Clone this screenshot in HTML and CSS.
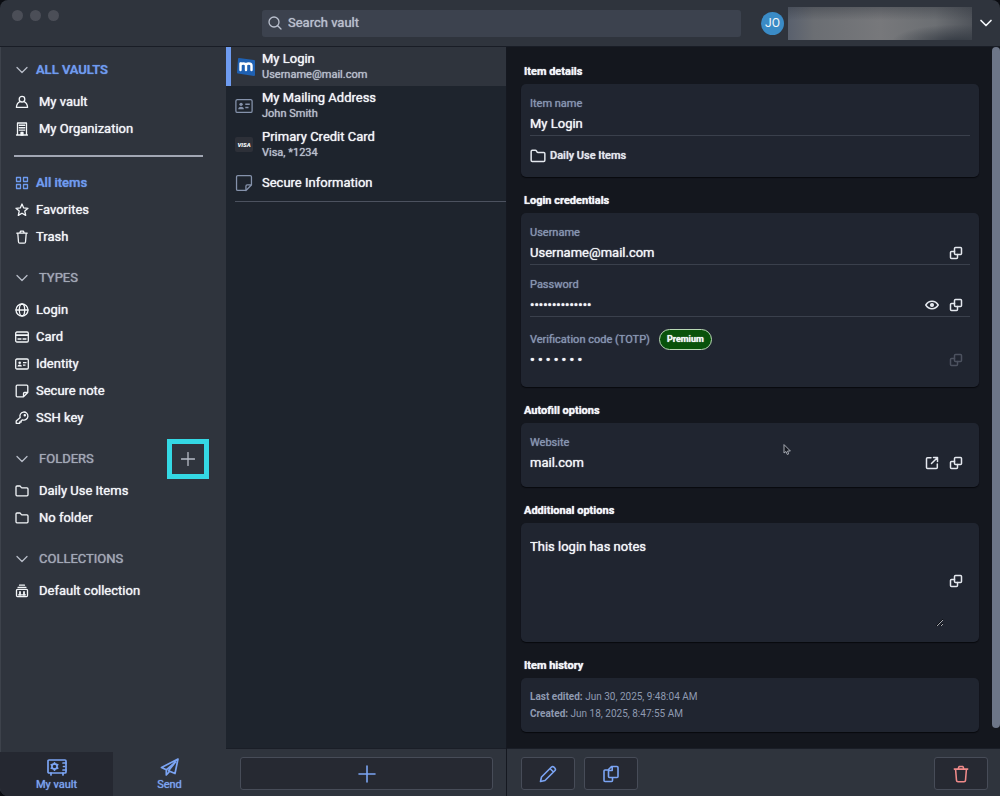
FILE: index.html
```html
<!DOCTYPE html>
<html lang="en">
<head>
<meta charset="utf-8">
<title>Vault</title>
<link rel="stylesheet" href="styles.css">
</head>
<body>
<svg class="sprite" aria-hidden="true">
  <symbol id="chevron" viewBox="0 0 14 14"><path d="M2 4.500l5 5 5-5"/></symbol>
  <symbol id="folder" viewBox="0 0 14 14"><path d="M1 10.800V3q0-1 1-1h2.600q.7 0 1 .5l.6 1q.2.4.8.4H12q1 0 1 1v5.900q0 1-1 1H2q-1 0-1-1z"/></symbol>
  <symbol id="note" viewBox="0 0 14 14"><path d="M8.500 12.800H2.200q-1 0-1-1V2.200q0-1 1-1h9.600q1 0 1 1v6.300l-4.300 4.300V9.500q0-1 1-1h3.300"/></symbol>
  <symbol id="idcard" viewBox="0 0 14 14"><rect x=".7" y="2" width="12.600" height="10" rx="1.200"/><g fill="currentColor" stroke="none"><circle cx="4.700" cy="5.700" r="1.300"/><path d="M2.500 9.500q0-2 2.200-2t2.200 2z"/><path d="M8 5h3.500v1.200H8zM8 7.500h2.500v1.200H8z"/></g></symbol>
  <symbol id="copy" viewBox="0 0 14 14"><rect x="5.500" y="1.500" width="7" height="7" rx="1"/><path d="M5.500 5.500h-3q-1 0-1 1v5q0 1 1 1h5q1 0 1-1v-3"/></symbol>
  <symbol id="trash" viewBox="0 0 14 14"><path d="M1.800 3.200h10.400M4.800 3L5.500 1.200h3L9.200 3M2.800 3.500l.7 8.500q.1 1.100 1.200 1.100h4.600q1.100 0 1.200-1.100l.7-8.500"/></symbol>
</svg>
<div class="window">
  <header class="topbar">
    <div class="lights"><i></i><i></i><i></i></div>
    <label class="search">
      <svg viewBox="0 0 14 14"><circle cx="6" cy="6" r="5"/><path d="M9.700 9.700L13 13"/></svg>
      <input type="text" placeholder="Search vault" aria-label="Search vault">
    </label>
    <button class="account" aria-label="Account">
      <span class="avatar">JO</span>
      <span class="redacted"></span>
      <svg class="bold"><use href="#chevron"/></svg>
    </button>
  </header>

  <aside class="sidebar">
    <nav class="filters">
      <section>
        <button class="heading active"><svg><use href="#chevron"/></svg>ALL VAULTS</button>
        <a class="row wide" href="#"><svg viewBox="0 0 14 14"><circle cx="7" cy="4.200" r="2.800"/><path d="M4.900 6.700C2.800 7.600 1.700 9.500 1.400 12.300h11.200C12.300 9.500 11.200 7.600 9.100 6.700"/></svg>My vault</a>
        <a class="row wide" href="#"><svg viewBox="0 0 14 14"><path d="M2.500 13V1h9v12zM1.500 13h11"/><path d="M4.300 3.300h1.200M6.400 3.300h1.200M8.500 3.300h1.200M4.300 5.700h1.200M6.400 5.700h1.200M8.500 5.700h1.200M4.300 8.100h1.200M6.400 8.100h1.200M8.500 8.100h1.200" stroke-width="1.400"/><path d="M6 13v-2.500h2V13z" fill="currentColor"/></svg>My Organization</a>
      </section>
      <hr>
      <section>
        <a class="row active" href="#"><svg viewBox="0 0 14 14"><path d="M1.500 1.500h4v4h-4zM8.500 1.500h4v4h-4zM1.500 8.500h4v4h-4zM8.500 8.500h4v4h-4z"/></svg>All items</a>
        <a class="row" href="#"><svg viewBox="0 0 14 14"><path d="M7 1l1.700 3.900 4.300.4-3.200 2.800.9 4.300L7 10.200l-3.700 2.200.9-4.300L1 5.300l4.300-.4z"/></svg>Favorites</a>
        <a class="row" href="#"><svg><use href="#trash"/></svg>Trash</a>
      </section>
      <section>
        <button class="heading"><svg><use href="#chevron"/></svg>TYPES</button>
        <a class="row" href="#"><svg viewBox="0 0 14 14"><circle cx="7" cy="7" r="6"/><ellipse cx="7" cy="7" rx="2.700" ry="6"/><path d="M1 7h12"/></svg>Login</a>
        <a class="row" href="#"><svg viewBox="0 0 14 14"><rect x=".7" y="2" width="12.600" height="10" rx="1.200"/><path d="M1 5.200h12" stroke-width="1.800"/><path d="M3 9h3M8 9h3"/></svg>Card</a>
        <a class="row" href="#"><svg><use href="#idcard"/></svg>Identity</a>
        <a class="row" href="#"><svg><use href="#note"/></svg>Secure note</a>
        <a class="row" href="#"><svg viewBox="0 0 14 14"><path d="M5.200 6.500A4 4 0 1 1 7.600 8.800L6.200 9.500V11H4.700v1.300H1.200V10z"/><circle cx="9.800" cy="4.200" r=".6" fill="currentColor"/></svg>SSH key</a>
      </section>
      <section>
        <div class="heading-bar">
          <button class="heading"><svg><use href="#chevron"/></svg>FOLDERS</button>
          <button class="add" aria-label="Add folder"><svg viewBox="0 0 14 14"><path d="M7 .5v13M.5 7h13"/></svg></button>
        </div>
        <a class="row wide" href="#"><svg><use href="#folder"/></svg>Daily Use Items</a>
        <a class="row wide" href="#"><svg><use href="#folder"/></svg>No folder</a>
      </section>
      <section>
        <button class="heading"><svg><use href="#chevron"/></svg>COLLECTIONS</button>
        <a class="row wide" href="#"><svg viewBox="0 0 14 14"><path d="M4.500 1.200h5M3 3.300h8"/><rect x="1.500" y="5.300" width="11" height="7.300" rx="1"/><path d="M5 7.800v3M9 7.800v3" stroke-width="1.800"/><path d="M3.500 10.800h7"/></svg>Default collection</a>
      </section>
    </nav>
    <nav class="tabs">
      <a class="tab current" href="#"><svg viewBox="0 0 20 18"><rect x="1" y="2" width="18" height="13" rx="1"/><circle cx="7.500" cy="8.500" r="2.600"/><path d="M7.500 4.800v1M7.500 11.200v1M4.300 6.700l.9.500M10.700 6.700l-.9.500M4.300 10.300l.9-.5M10.700 10.300l-.9-.5M16 5h3M16.500 8.500h1M16 12h3M4 15v2M16 15v2"/></svg>My vault</a>
      <a class="tab" href="#"><svg viewBox="0 0 20 18"><path d="M18 1L1.500 9.500l4.800 2.300L15.500 4 8.500 12.800l6.500 2.700zM6.300 11.800V17l3.200-3.500"/></svg>Send</a>
    </nav>
  </aside>

  <section class="list">
    <div class="items">
      <button class="item selected"><svg class="brand" viewBox="0 0 20 20"><path d="M2 2q0-1 1-1l15 2q1 0 1 1v14q0 1-1 1L2 16.500q-1 0-1-1z" fill="#1f61b3" stroke="none"/><path d="M4.500 13V6.500M4.500 8.500q0-2 2.700-2T10 8.500V13M10 8.500q0-2 2.700-2t2.800 2V13" stroke="#fff" stroke-width="2.400"/></svg><span><b>My Login</b><small>Username@mail.com</small></span></button>
      <button class="item"><svg><use href="#idcard"/></svg><span><b>My Mailing Address</b><small>John Smith</small></span></button>
      <button class="item"><i class="visa">VISA</i><span><b>Primary Credit Card</b><small>Visa, *1234</small></span></button>
      <button class="item last"><svg><use href="#note"/></svg><span><b>Secure Information</b></span></button>
    </div>
    <footer class="bar"><button class="action grow" aria-label="New item"><svg viewBox="0 0 18 18"><path d="M9 1v16M1 9h16"/></svg></button></footer>
  </section>

  <main class="details">
    <div class="scroll">
      <div class="sections">
        <h2>Item details</h2>
        <div class="card short">
          <div class="field ruled">
            <label for="name">Item name</label>
            <div class="value"><input id="name" type="text" value="My Login" readonly></div>
          </div>
          <div class="folder"><svg><use href="#folder"/></svg>Daily Use Items</div>
        </div>

        <h2>Login credentials</h2>
        <div class="card tall">
          <div class="field ruled">
            <label for="user">Username</label>
            <div class="value"><input id="user" type="text" value="Username@mail.com" readonly>
              <button aria-label="Copy username"><svg><use href="#copy"/></svg></button></div>
          </div>
          <div class="field ruled">
            <label for="pass">Password</label>
            <div class="value"><input id="pass" type="password" value="password123456" readonly>
              <button aria-label="Show password"><svg viewBox="0 0 14 14"><path d="M.8 7Q3 3.300 7 3.300T13.200 7Q11 10.700 7 10.700T.8 7z"/><circle cx="7" cy="7" r="1.300" fill="currentColor"/></svg></button>
              <button aria-label="Copy password"><svg><use href="#copy"/></svg></button></div>
          </div>
          <div class="field totp">
            <div class="caption"><label for="totp">Verification code (TOTP)</label><span class="badge">Premium</span></div>
            <div class="value"><input id="totp" type="text" value="• • • • • • •" readonly>
              <button disabled aria-label="Copy code"><svg><use href="#copy"/></svg></button></div>
          </div>
        </div>

        <h2>Autofill options</h2>
        <div class="card">
          <div class="field">
            <label for="site">Website</label>
            <div class="value"><input id="site" type="text" value="mail.com" readonly>
              <button aria-label="Open website"><svg viewBox="0 0 14 14"><path d="M6 1.700H2.500q-1 0-1 1v8.800q0 1 1 1h8.800q1 0 1-1V8M8.500 1.500h4v4M12.300 1.700L6.500 7.500"/></svg></button>
              <button aria-label="Copy website"><svg><use href="#copy"/></svg></button></div>
          </div>
          <svg class="pointer" viewBox="0 0 8 12"><path d="M1 1v8l2-1.500L4.300 10.500l1.400-.6L4.500 7H7z"/></svg>
        </div>

        <h2>Additional options</h2>
        <div class="card">
          <div class="value notes"><textarea aria-label="Notes" readonly>This login has notes</textarea>
            <button aria-label="Copy notes"><svg><use href="#copy"/></svg></button></div>
        </div>

        <h2>Item history</h2>
        <div class="card history">
          <p><b>Last edited:</b> Jun 30, 2025, 9:48:04 AM</p>
          <p><b>Created:</b> Jun 18, 2025, 8:47:55 AM</p>
        </div>
      </div>
      <div class="thumb"></div>
    </div>
    <footer class="bar">
      <button class="action" aria-label="Edit"><svg viewBox="0 0 18 18"><path d="M1.500 16.500l1-4.500L12.500 2q1.200-1 2.500.2l.8.8q1.200 1.300.2 2.500L6 15.500zM11 3.500l3.500 3.500"/></svg></button>
      <button class="action" aria-label="Clone"><svg viewBox="0 0 18 18"><path d="M6.500 4.500l3-3H15q1 0 1 1v9q0 1-1 1H7.500q-1 0-1-1zM6.700 5.500h3.500V1.700M6.500 5H3Q2 5 2 6v9.500q0 1 1 1h6.500q1 0 1-1v-3"/></svg></button>
      <button class="action danger" aria-label="Delete"><svg><use href="#trash"/></svg></button>
    </footer>
  </main>
</div>
</body>
</html>
```
FILE: styles.css
```css
* { box-sizing: border-box; }
body {
  margin: 0;
  background: #0b0d12;
  font: 400 13px/16px Roboto, sans-serif;
  color: #f3f6f9;
  text-shadow: 0 0 1px currentColor;
}
.sprite { position: absolute; width: 0; height: 0; }
svg {
  flex: none;
  width: 14px;
  height: 14px;
  fill: none;
  stroke: currentColor;
  stroke-width: 1.3;
  stroke-linejoin: round;
  stroke-linecap: round;
}
button, input, textarea { font: inherit; color: inherit; text-shadow: inherit; background: none; border: 0; padding: 0; margin: 0; }
input, textarea { outline: 0; min-width: 0; }
a { color: inherit; text-decoration: none; }

.window {
  display: grid;
  grid-template-columns: 226px 281px minmax(0, 1fr);
  grid-template-rows: 47px minmax(0, 1fr);
  height: 100vh;
  overflow: hidden;
  border-radius: 8px 8px 0 8px;
  background: #2f343d;
}

.topbar {
  grid-column: 1 / -1;
  display: grid;
  grid-template-columns: 262px minmax(0, 1fr) 259px;
  align-items: center;
  border-bottom: 1px solid #191d26;
}
.lights { display: flex; gap: 7px; padding: 0 0 15px 12px; }
.lights i { width: 11px; height: 11px; border-radius: 50%; background: #4b4e57; }
.search {
  display: flex;
  align-items: center;
  gap: 6px;
  height: 27px;
  padding: 0 6px;
  border-radius: 3px;
  background: #3c424e;
  color: #bac0ce;
}
.search input { flex: 1; }
.search input::placeholder { color: #bac0ce; opacity: 1; }
.account { display: flex; align-items: center; padding-left: 20px; }
.avatar {
  width: 23px;
  height: 23px;
  border-radius: 50%;
  background: #3a8bc6;
  font-size: 12px;
  line-height: 23px;
  text-align: center;
  text-shadow: none;
}
.redacted {
  flex: 1;
  height: 33px;
  margin: 0 7px 0 4px;
  background:
    radial-gradient(ellipse 36% 55% at 92% 108%, #333942 0, #33394200 100%),
    linear-gradient(#2f343d66, #2f343d00 40%),
    linear-gradient(90deg, #59606d 0, #6b6e73 14%, #77787b 50%, #6c6f73 80%, #50545b 100%);
}
.bold { stroke-width: 1.7; margin-right: 7px; }

.sidebar { display: flex; flex-direction: column; box-shadow: inset 1px 0 #3d424b; }
.filters { flex: 1; padding: 5px 17px 0 15px; }
.filters section + section { margin-top: 10px; }
.filters hr { height: 2px; margin: 13px 6px 12px -1px; border: 0; background: #a2a7b4; }
.heading { display: flex; align-items: center; gap: 10px; height: 36px; color: #a2a8b6; }
.heading svg { color: #b7bcc7; }
.active { color: #6e9bf0; font-weight: 500; }
.heading.active { gap: 7px; }
.heading-bar { display: flex; align-items: center; justify-content: space-between; }
.add {
  display: grid;
  place-items: center;
  width: 42px;
  height: 40px;
  margin: -2px 0;
  border: 5px solid #34d8e4;
  color: #b7bcc7;
}
.row { display: flex; align-items: center; gap: 7px; height: 27px; }
.row.wide { gap: 10px; }

.tabs { display: grid; grid-template-columns: 1fr 1fr; height: 44px; }
.tab {
  display: flex;
  flex-direction: column;
  align-items: center;
  gap: 1px;
  padding-top: 6px;
  font-size: 11px;
  line-height: 16px;
  color: #7ba4f3;
}
.tab svg { width: 20px; height: 18px; stroke-width: 1.7; }
.tab.current { background: #252831; }

.list { display: flex; flex-direction: column; border-right: 1px solid #151820; background: #1e242d; }
.items { flex: 1; }
.item {
  display: flex;
  align-items: center;
  gap: 9px;
  width: 100%;
  height: 39px;
  padding-left: 9px;
  text-align: left;
}
.item svg { width: 18px; height: 18px; color: #8592ab; stroke-width: 1; }
.item svg.brand { width: 20px; height: 20px; }
.item b, .item small { display: block; }
.item b { font-weight: 400; }
.item small { font-size: 11px; color: #bac0ce; }
.item.selected { gap: 6px; border-left: 5px solid #6e9bf0; padding-left: 5px; background: #2f343d; }
.item.last { width: auto; height: 38px; min-width: calc(100% - 9px); margin-left: 9px; padding-left: 0; border-bottom: 1px solid #4c525f; }
.visa {
  width: 18px;
  height: 15px;
  border-radius: 2px;
  background: #2d3038;
  font-size: 6px;
  font-weight: 900;
  line-height: 15px;
  text-align: center;
  text-shadow: none;
}
.bar { display: flex; gap: 9px; padding: 8px 13px 8px 14px; height: 48px; border-top: 1px solid #1a1e27; background: #2f343d; }
.action {
  display: grid;
  place-items: center;
  width: 54px;
  height: 33px;
  border: 1px solid #474c58;
  border-radius: 3px;
  background: #262932;
  color: #7ba4f3;
}
.action svg { width: 18px; height: 18px; stroke-width: 1.6; }
.grow { flex: 1; }
.danger { margin-left: auto; color: #f08a8a; }
.danger svg { stroke-width: 1.2; }

.details { display: flex; flex-direction: column; min-height: 0; background: #14171e; }
.scroll { flex: 1; display: flex; min-height: 0; overflow: hidden; }
.sections { flex: 1; padding: 1px 13px 0 14px; }
.thumb { width: 8px; margin-bottom: 20px; border-radius: 5px; background: #6d7688; }
.details .bar { padding-right: 12px; }
h2 { margin: 0; padding: 16px 3px 4px; font-size: 11px; line-height: 16px; font-weight: 700; }
.card {
  position: relative;
  padding: 10px 9px 14px;
  border-radius: 5px;
  background: #202530;
  box-shadow: 0 1px 1px #07090d;
}
.card.short { padding-bottom: 11px; }
.card.tall { padding-bottom: 17px; }
.field label { display: block; font-size: 11px; line-height: 20px; color: #8796b2; }
.ruled { padding-bottom: 1px; margin-bottom: 10px; border-bottom: 1px solid #3a404c; }
.value { display: flex; align-items: center; gap: 10px; height: 20px; padding-right: 7px; }
.value input { flex: 1; }
.value button { display: flex; color: #e4e8ee; }
.value svg { stroke-width: 1.5; }
.value button:disabled { color: #4c525f; }
.folder { display: flex; align-items: center; gap: 4px; height: 20px; font-size: 11px; font-weight: 500; color: #e4e8ee; }
.folder svg { width: 16px; height: 16px; }
.totp { padding-top: 2px; }
#totp { font-weight: 700; }
.caption { display: flex; align-items: center; gap: 9px; }
.badge {
  height: 21px;
  padding: 0 7px;
  border: 1px solid #b9d8b5;
  border-radius: 11px;
  background: #08520a;
  font-size: 9px;
  line-height: 19px;
  font-weight: 700;
}
.pointer {
  position: absolute;
  left: 262px;
  top: 21px;
  width: 8px;
  height: 12px;
  fill: #15181f;
  color: #a7abb3;
  stroke-width: 1;
}
.value.notes { height: 95px; gap: 5px; }
textarea { flex: 1; height: 93px; padding-top: 5px; resize: vertical; }
.history { padding: 10px 9px; font-size: 10px; color: #8f9ab0; text-shadow: none; }
.history p { margin: 0; line-height: 17px; }
.history b { font-weight: 700; }
```
